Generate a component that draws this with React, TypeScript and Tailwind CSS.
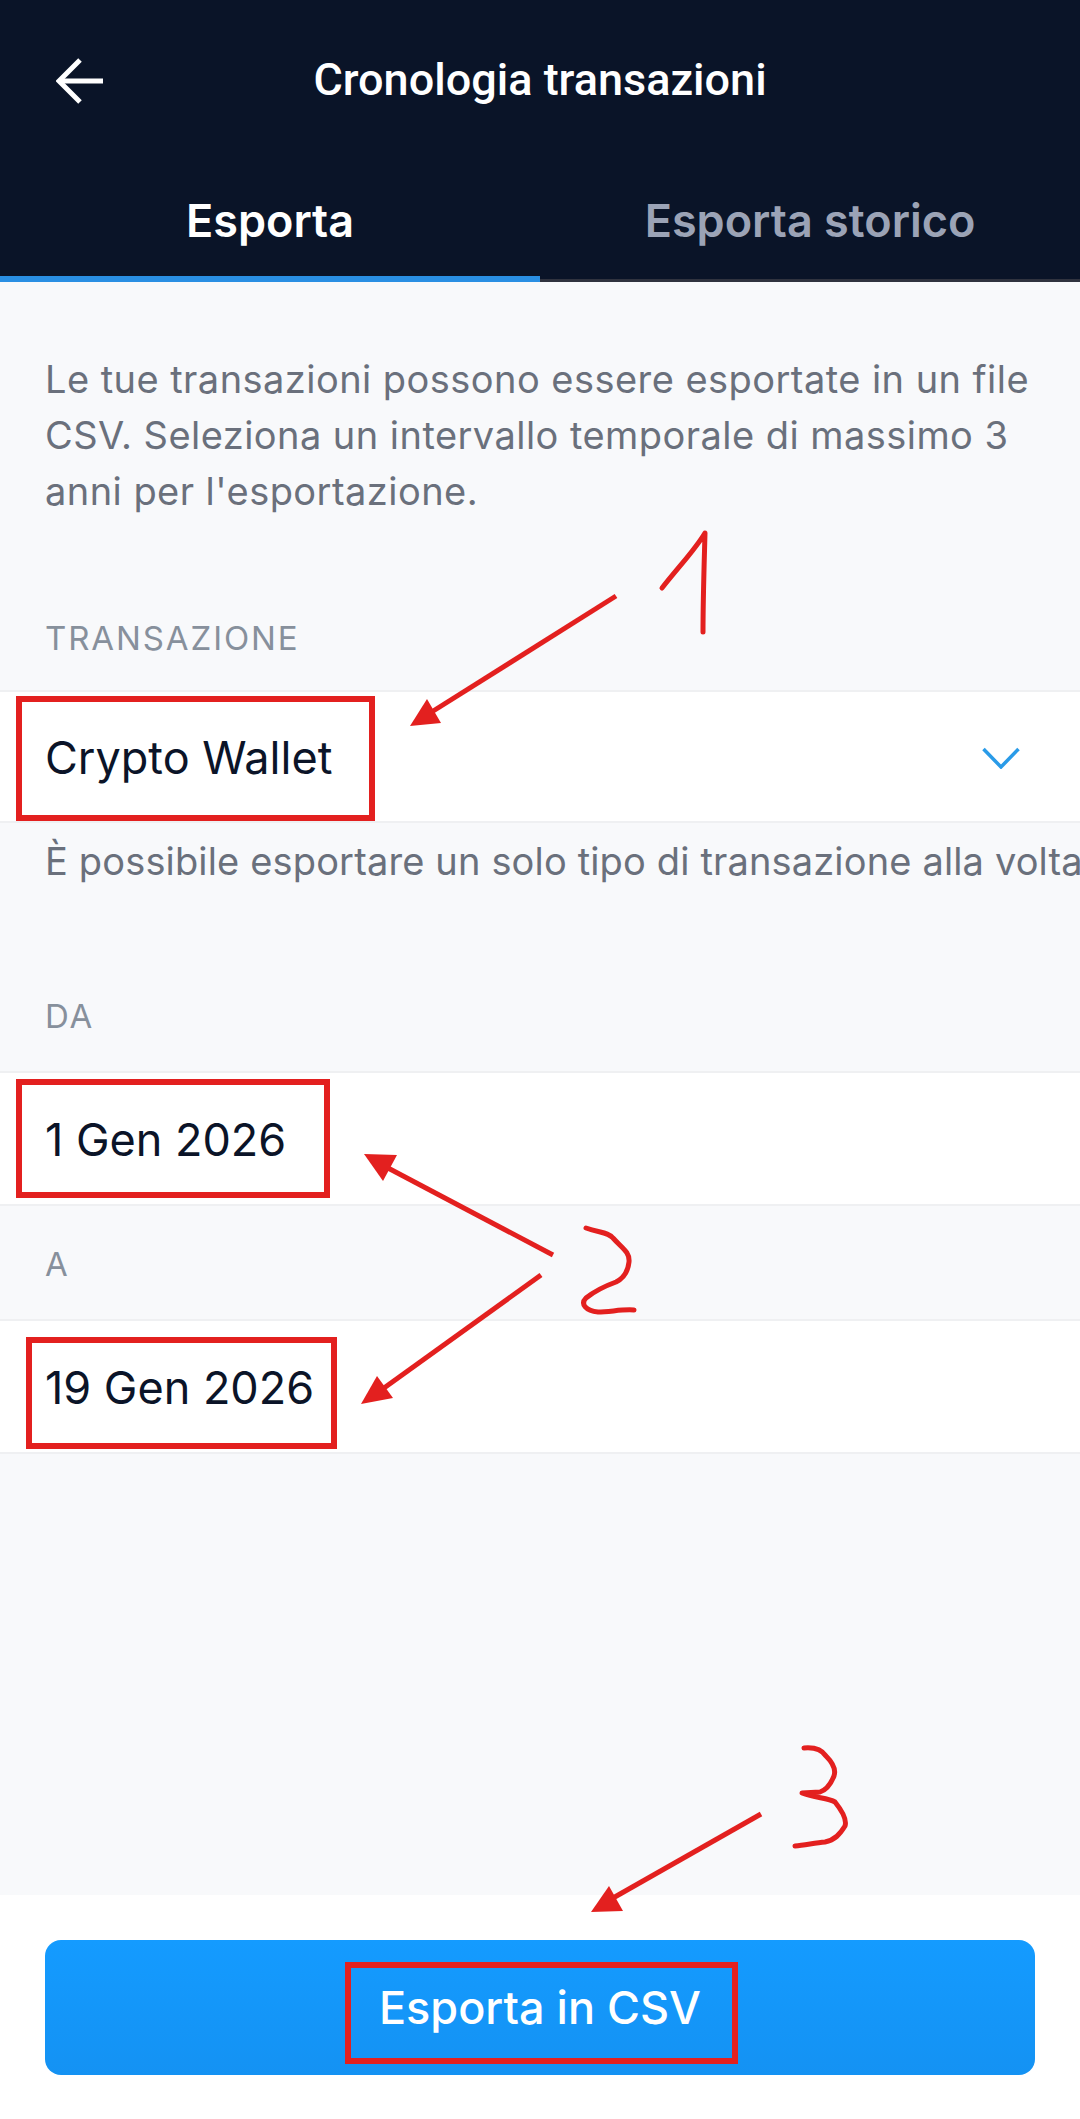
import React from "react";

const inter = "font-['Inter',sans-serif]";

function Label({ children, className = "" }: { children: React.ReactNode; className?: string }) {
  return (
    <div className={`${inter} pl-[45px] text-[33px] leading-[40px] tracking-[1.9px] text-[#87909c] ${className}`}>
      {children}
    </div>
  );
}

function Row({ children, className = "" }: { children: React.ReactNode; className?: string }) {
  return (
    <div
      className={`${inter} flex items-center justify-between border-y-2 border-[#eff0f2] bg-white pl-[45px] pr-[60px] pt-[3px] text-[45px] text-[#0b1428] ${className}`}
    >
      {children}
    </div>
  );
}

function Annotations() {
  const red = "#e3201f";
  return (
    <svg className="pointer-events-none absolute left-0 top-0" width="1080" height="2119" viewBox="0 0 1080 2119" fill="none">
      <g stroke={red} strokeWidth="6" fill="none">
        <rect x="19" y="699" width="353" height="119" />
        <rect x="19" y="1082" width="308" height="113" />
        <rect x="29" y="1340" width="305" height="106" />
        <rect x="348" y="1965" width="387" height="96" />
      </g>
      <g stroke={red} strokeWidth="5" fill="none">
        <path d="M616 596 L430 713" />
        <path d="M553 1255 L388 1168" />
        <path d="M541 1275 L384 1388" />
        <path d="M761 1814 L613 1898" />
      </g>
      <g fill={red}>
        <polygon points="410,726 427,699 441,723" />
        <polygon points="364,1154 397,1155 383,1181" />
        <polygon points="361,1404 377,1376 393,1398" />
        <polygon points="591,1912 609,1886 623,1911" />
      </g>
      <g stroke={red} strokeWidth="5" fill="none" strokeLinecap="round" strokeLinejoin="round">
        <path d="M662 588 C680 565 695 550 705 533 C704 570 703 600 703 632" />
        <path d="M586 1228 C600 1233 608 1232 613 1238 C622 1248 630 1252 629 1262 C628 1272 624 1278 616 1282 C605 1286 596 1290 586 1298 C580 1304 586 1311 598 1312 C610 1312 622 1309 634 1310" />
        <path d="M804 1748 C815 1747 822 1750 826 1756 C834 1764 836 1770 834 1776 C830 1786 826 1790 820 1792 L802 1793 C815 1798 828 1798 835 1802 C843 1812 847 1820 845 1826 C840 1834 835 1840 825 1842 C815 1843 805 1845 795 1846" />
      </g>
    </svg>
  );
}

export default function App() {
  return (
    <div className="relative flex h-[2119px] w-[1080px] flex-col overflow-hidden bg-[#f8f9fb]">
      <header className="bg-[#0a1428]">
        <div className="relative flex h-[160px] items-center justify-center">
          <svg className="absolute left-[56px] top-[58px]" width="48" height="46" viewBox="0 0 48 46" fill="none" stroke="#ffffff" strokeWidth="5">
            <path d="M47 23 H4" />
            <path d="M24 2 L3 23 L24 44" />
          </svg>
          <div className="font-['Roboto',sans-serif] text-[45px] font-medium text-white">Cronologia transazioni</div>
        </div>
        <div className="flex h-[122px]">
          <div className={`${inter} flex w-[540px] items-center justify-center border-b-[6px] border-[#2a8fe3] pt-[5px] text-[45px] font-semibold text-white`}>
            Esporta
          </div>
          <div className={`${inter} flex w-[540px] items-center justify-center pb-[1px] text-[45px] font-semibold text-[#9ba3b6]`}>
            Esporta storico
          </div>
        </div>
      </header>
      <div className="-mt-[3px] ml-[540px] h-[3px] bg-[#30333f]" />

      <main className="flex-1">
        <p className={`${inter} mt-[69px] px-[45px] text-[38px] leading-[56px] tracking-[0.45px] text-[#6a707c]`}>
          Le tue transazioni possono essere esportate in un file CSV. Seleziona un intervallo temporale di massimo 3 anni per l'esportazione.
        </p>
        <Label className="mt-[99px]">TRANSAZIONE</Label>
        <Row className="mt-[32px] h-[133px]">
          <span>Crypto Wallet</span>
          <svg width="38" height="22" viewBox="0 0 38 22" fill="none" stroke="#2a9be8" strokeWidth="3.5">
            <path d="M1.5 2 L19 20 L36.5 2" />
          </svg>
        </Row>
        <p className={`${inter} mt-[16px] whitespace-nowrap pl-[45px] text-[38px] leading-[44px] tracking-[0.15px] text-[#6a707c]`}>
          È possibile esportare un solo tipo di transazione alla volta.
        </p>
        <Label className="mt-[113px]">DA</Label>
        <Row className="mt-[35px] h-[135px]">1 Gen 2026</Row>
        <Label className="mt-[38px]">A</Label>
        <Row className="mt-[35px] h-[135px]">19 Gen 2026</Row>
      </main>

      <footer className="flex h-[224px] items-start bg-white px-[45px] pt-[45px]">
        <div className={`${inter} flex h-[135px] w-full items-center justify-center rounded-[16px] bg-linear-to-b from-[#149bff] to-[#1492f3] text-[45px] font-medium text-white`}>
          Esporta in CSV
        </div>
      </footer>
      <Annotations />
    </div>
  );
}
